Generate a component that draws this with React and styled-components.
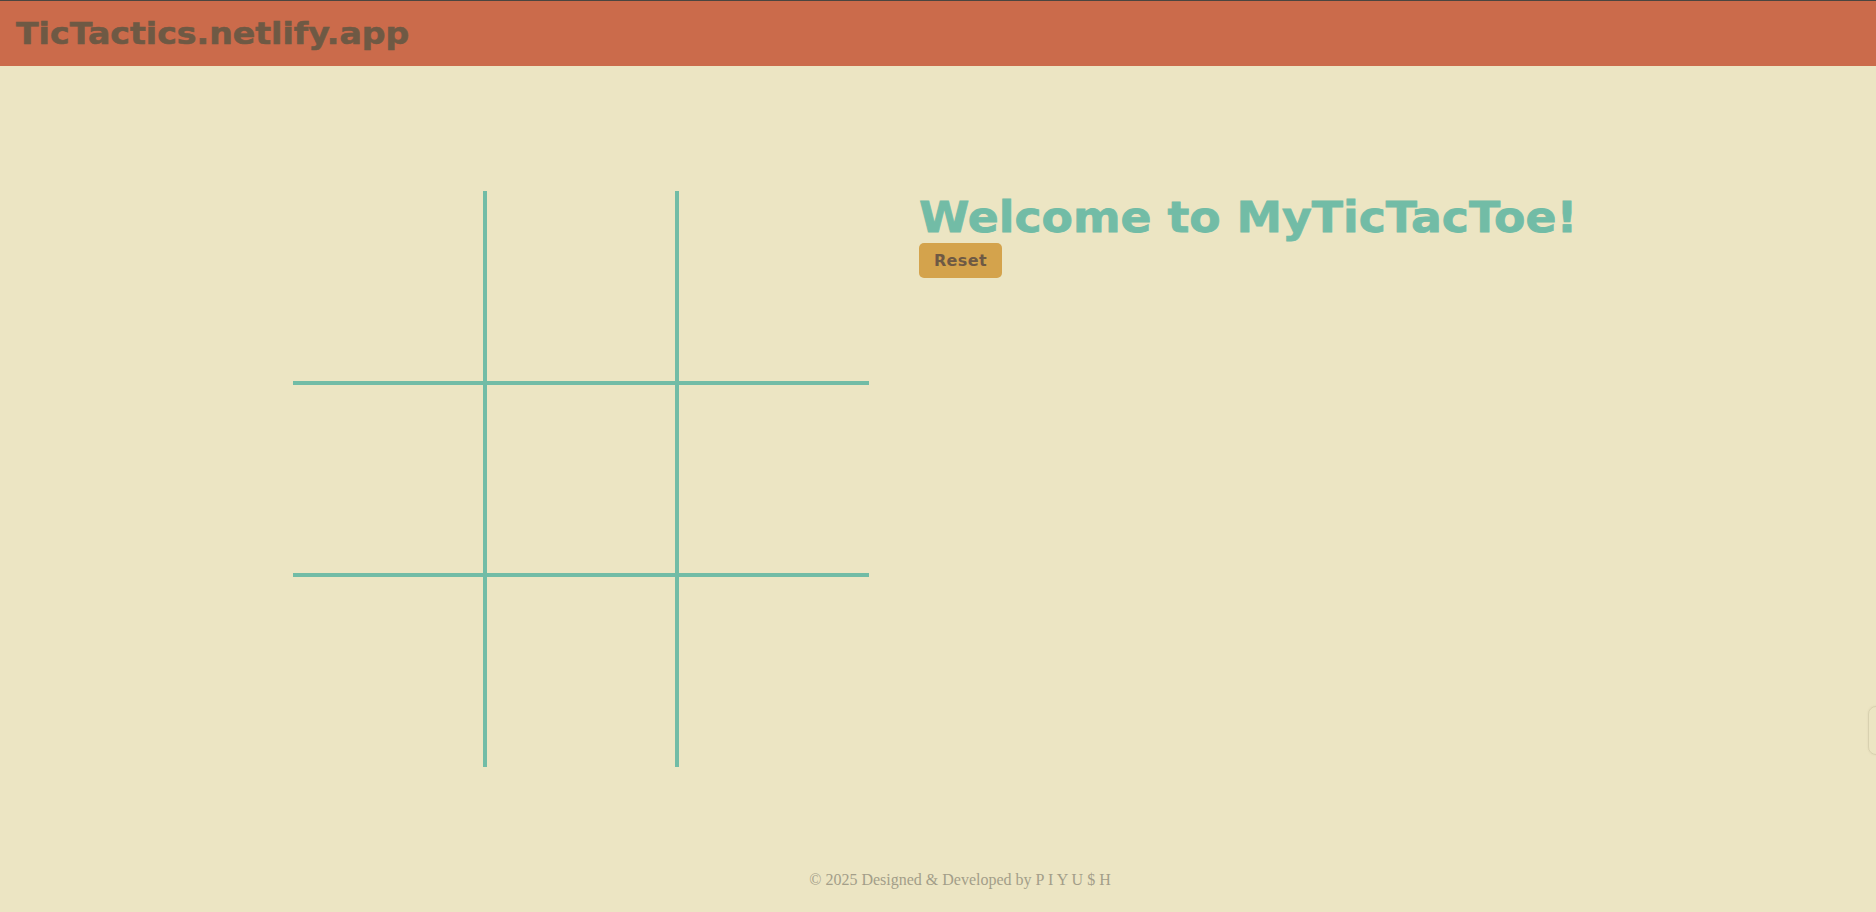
import React, { useState } from "react";
import styled, { createGlobalStyle } from "styled-components";

const Global = createGlobalStyle`
  html, body { margin: 0; padding: 0; height: 100%; }
  body { background: #ece5c3; overflow: hidden; }
  #root { height: 100%; }
`;

const Page = styled.div`
  min-height: 100vh;
  display: flex;
  flex-direction: column;
  background: #ece5c3;
  position: relative;
  overflow: hidden;
`;

const Header = styled.header`
  height: 65px;
  border-top: 1px solid #4a4540;
  background: #cb6b4b;
  display: flex;
  align-items: center;
  padding-left: 16px;
`;

const Brand = styled.h1`
  margin: 0;
  font-family: "DejaVu Sans", "Liberation Sans", sans-serif;
  font-weight: 700;
  font-size: 30px;
  color: #6e5944;
  -webkit-text-stroke: 0.6px #6e5944;
  transform: scaleX(1.105);
  transform-origin: left center;
  white-space: nowrap;
`;

const Main = styled.main`
  flex: 1;
  display: flex;
  justify-content: center;
  align-items: flex-start;
  gap: 52px;
  padding-top: 125px;
`;

const Board = styled.div`
  display: grid;
  grid-template-columns: repeat(3, 192px);
  grid-template-rows: repeat(3, 192px);
`;

const Cell = styled.button`
  appearance: none;
  background: transparent;
  padding: 0;
  margin: 0;
  border: 0 solid #72bca6;
  border-right-width: ${(p) => (p.$col < 2 ? "2px" : "0")};
  border-left-width: ${(p) => (p.$col > 0 ? "2px" : "0")};
  border-bottom-width: ${(p) => (p.$row < 2 ? "2px" : "0")};
  border-top-width: ${(p) => (p.$row > 0 ? "2px" : "0")};
  font-family: "DejaVu Sans", sans-serif;
  font-weight: 700;
  font-size: 110px;
  color: #cb6b4b;
  cursor: pointer;
  display: flex;
  align-items: center;
  justify-content: center;
`;

const Side = styled.section`
  display: flex;
  flex-direction: column;
  align-items: flex-start;
  width: 662px;
  padding-top: 2px;
`;

const Title = styled.h2`
  margin: 0 0 0 -2px;
  font-family: "DejaVu Sans", "Liberation Sans", sans-serif;
  font-weight: 700;
  font-size: 42px;
  line-height: 50px;
  color: #72bca6;
  -webkit-text-stroke: 0.8px #72bca6;
  white-space: nowrap;
  transform: scaleX(1.088);
  transform-origin: left center;
`;

const ResetButton = styled.button`
  appearance: none;
  border: none;
  border-radius: 5px;
  background: #d4a34c;
  color: #6e5944;
  font-family: "DejaVu Sans", "Liberation Sans", sans-serif;
  font-weight: 700;
  font-size: 16px;
  letter-spacing: 0.4px;
  width: 83px;
  height: 35px;
  padding: 0;
  margin-left: -2px;
  cursor: pointer;
`;

const Footer = styled.footer`
  text-align: center;
  padding: 0 0 23px 44px;
  font-family: "Liberation Serif", "Times New Roman", serif;
  font-size: 16px;
  color: #a39e89;
`;

const EdgeWidget = styled.div`
  position: absolute;
  right: -40px;
  top: 706px;
  width: 46px;
  height: 47px;
  border-radius: 8px;
  border: 1px solid rgba(180, 172, 140, 0.35);
  box-shadow: 0 0 2px rgba(160, 150, 120, 0.2);
`;

export default function App() {
  const [cells, setCells] = useState(Array(9).fill(""));
  const [xTurn, setXTurn] = useState(true);

  const play = (i) => {
    if (cells[i]) return;
    const next = cells.slice();
    next[i] = xTurn ? "X" : "O";
    setCells(next);
    setXTurn(!xTurn);
  };

  return (
    <Page>
      <Global />
      <Header>
        <Brand>TicTactics.netlify.app</Brand>
      </Header>
      <Main>
        <Board>
          {cells.map((v, i) => (
            <Cell key={i} $row={Math.floor(i / 3)} $col={i % 3} onClick={() => play(i)}>
              {v}
            </Cell>
          ))}
        </Board>
        <Side>
          <Title>Welcome to MyTicTacToe!</Title>
          <ResetButton
            onClick={() => {
              setCells(Array(9).fill(""));
              setXTurn(true);
            }}
          >
            Reset
          </ResetButton>
        </Side>
      </Main>
      <Footer>© 2025 Designed &amp; Developed by P I Y U $ H</Footer>
      <EdgeWidget />
    </Page>
  );
}
